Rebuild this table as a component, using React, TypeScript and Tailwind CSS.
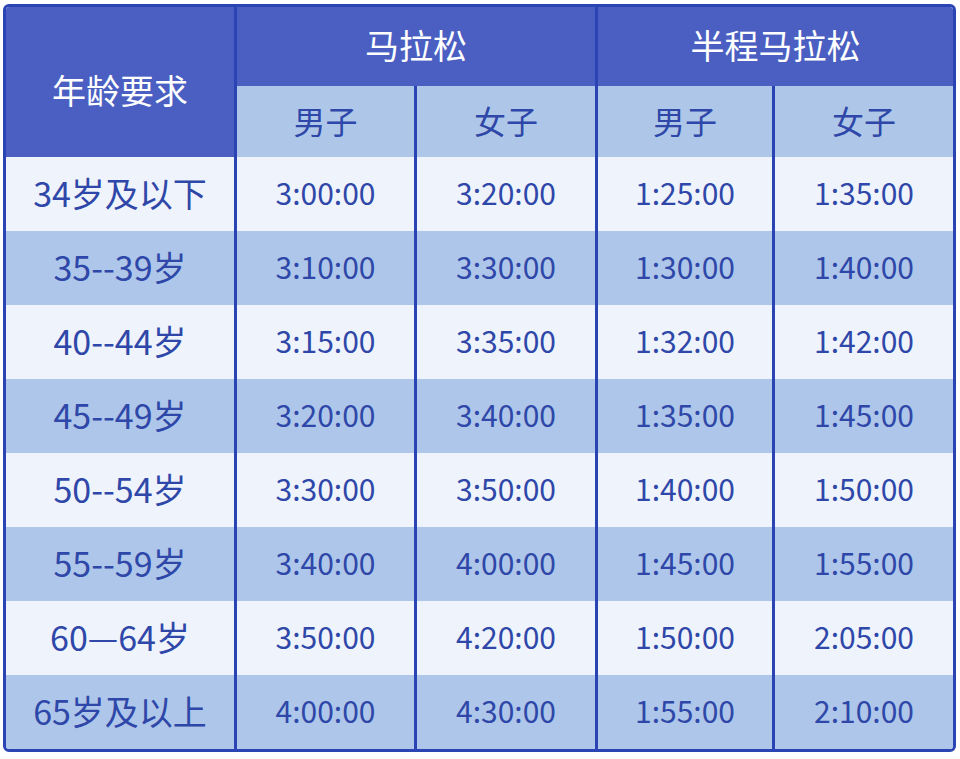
const rows = [
  ["34岁及以下", "3:00:00", "3:20:00", "1:25:00", "1:35:00"],
  ["35--39岁", "3:10:00", "3:30:00", "1:30:00", "1:40:00"],
  ["40--44岁", "3:15:00", "3:35:00", "1:32:00", "1:42:00"],
  ["45--49岁", "3:20:00", "3:40:00", "1:35:00", "1:45:00"],
  ["50--54岁", "3:30:00", "3:50:00", "1:40:00", "1:50:00"],
  ["55--59岁", "3:40:00", "4:00:00", "1:45:00", "1:55:00"],
  ["60—64岁", "3:50:00", "4:20:00", "1:50:00", "2:05:00"],
  ["65岁及以上", "4:00:00", "4:30:00", "1:55:00", "2:10:00"],
];

const font = { fontFamily: '"Noto Sans CJK SC", "Noto Sans", sans-serif' };

export default function App() {
  return (
    <div className="min-h-[759px] w-[960px] bg-white pl-[3px] pt-[4px]" style={font}>
      <div className="w-[953px] overflow-hidden rounded-[6px] border-[3px] border-[#2a44b4]">
        <table className="w-[947px] table-fixed border-separate border-spacing-0 text-center">
          <colgroup>
            <col className="w-[228px]" />
            <col className="w-[180px]" />
            <col className="w-[181px]" />
            <col className="w-[177px]" />
            <col className="w-[181px]" />
          </colgroup>
          <thead>
            <tr className="h-[79px]">
              <th
                rowSpan={2}
                className="bg-[#4a5fc1] pt-[14px] align-middle text-[34px] font-normal text-white"
              >
                年龄要求
              </th>
              <th
                colSpan={2}
                className="border-l-[3px] border-[#2a44b4] bg-[#4a5fc1] pb-[4px] align-middle text-[34px] font-normal text-white"
              >
                马拉松
              </th>
              <th
                colSpan={2}
                className="border-l-[3px] border-[#2a44b4] bg-[#4a5fc1] pb-[4px] align-middle text-[34px] font-normal text-white"
              >
                半程马拉松
              </th>
            </tr>
            <tr className="h-[71px]">
              {["男子", "女子", "男子", "女子"].map((t, i) => (
                <th
                  key={i}
                  className="border-l-[3px] border-[#2a44b4] bg-[#aec7e9] pb-[4px] align-middle text-[32px] font-normal text-[#2e47a8]"
                >
                  {t}
                </th>
              ))}
            </tr>
          </thead>
          <tbody>
            {rows.map((r, ri) => (
              <tr key={ri} className={ri % 2 === 0 ? "h-[74px] bg-[#eef3fc]" : "h-[74px] bg-[#adc6e9]"}>
                {r.map((c, ci) => (
                  <td
                    key={ci}
                    className={
                      ci === 0
                        ? "pb-[4px] align-middle text-[34px] text-[#2e47a8]"
                        : "border-l-[3px] border-[#2a44b4] pb-[4px] align-middle text-[30px] text-[#2e47a8]"
                    }
                  >
                    {c}
                  </td>
                ))}
              </tr>
            ))}
          </tbody>
        </table>
      </div>
    </div>
  );
}
